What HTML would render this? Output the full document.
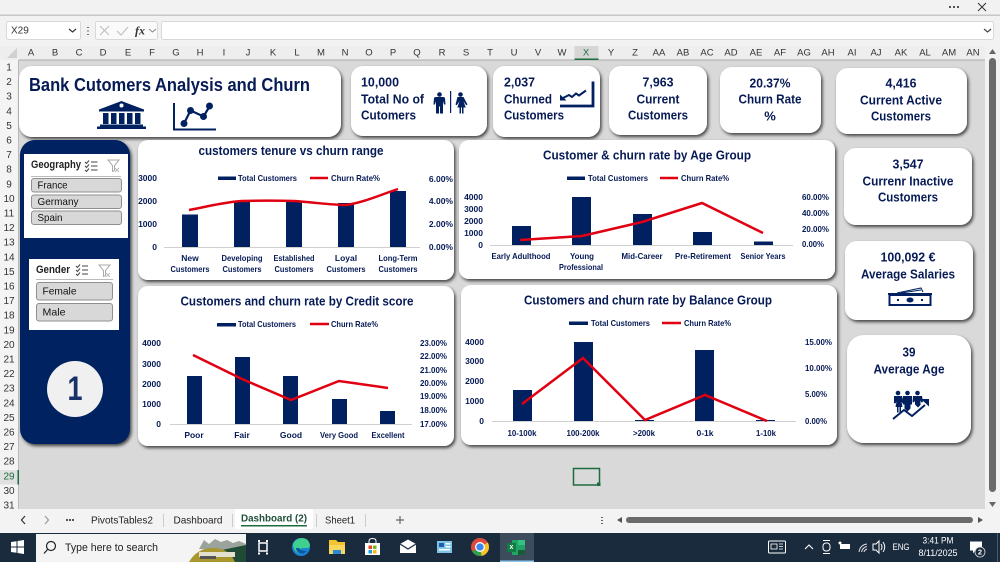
<!DOCTYPE html>
<html><head><meta charset="utf-8"><style>
html,body{margin:0;padding:0;width:1000px;height:562px;overflow:hidden;background:#d9d9d9}
svg{display:block;font-family:"Liberation Sans",sans-serif;filter:blur(.3px)}
text{dominant-baseline:central}
.c{font-size:9.5px;fill:#333;text-anchor:middle}
.r{font-size:10px;fill:#333;text-anchor:middle}
.n{font-weight:bold;fill:#061a55;text-anchor:middle;font-size:13px}
.l{font-weight:bold;fill:#061a55;font-size:13px}
.t{font-weight:bold;fill:#061a55;text-anchor:middle;font-size:13px}
.a{font-weight:bold;fill:#061a55;font-size:8.5px}
.m{font-weight:bold;fill:#061a55;font-size:8.5px;text-anchor:middle}
.e{font-weight:bold;fill:#061a55;font-size:8.5px;text-anchor:end}
.b{fill:#002060}
.ln{fill:none;stroke:#e00012;stroke-width:2.500}
.ax{stroke:#d0d0d0;stroke-width:1}
.card{fill:#fff;filter:url(#s)}
.sl{fill:#d8d8d8;stroke:#8f8f8f;stroke-width:1}
.st{font-size:10.500px;fill:#111}
.tb{font-size:10.500px;fill:#222;text-anchor:middle}
.ic{fill:#002060}
.is{fill:none;stroke:#002060}
</style></head><body>
<svg width="1000" height="562" viewBox="0 0 1000 562" xmlns="http://www.w3.org/2000/svg">
<defs><filter id="s" x="-10%" y="-10%" width="125%" height="125%"><feDropShadow dx="1.500" dy="2" stdDeviation="1.500" flood-color="#000" flood-opacity=".7"/></filter></defs>

<!-- chrome -->
<rect width="1000" height="46" fill="#f2f2f2"/>
<rect y="14.500" width="1000" height="1.500" fill="#c6c6c6"/>
<circle cx="954" cy="7" r="1" fill="#222"/><circle cx="950" cy="7" r="1" fill="#222"/><circle cx="958" cy="7" r="1" fill="#222"/>
<path d="M978 3l8 8M986 3l-8 8" stroke="#333" fill="none"/>
<rect x="6.500" y="21.500" width="74" height="18" rx="2" fill="#fff" stroke="#d8d8d8"/>
<text x="11" y="31" font-size="10" fill="#333">X29</text>
<path d="M69 29l3.500 3 3.500-3" fill="none" stroke="#333" stroke-width="1.200"/>
<path d="M88 27v1M88 30.500v1M88 34v1" stroke="#444" stroke-width="1.500"/>
<rect x="95.500" y="21.500" width="62" height="18" rx="2" fill="#fafafa" stroke="#d8d8d8"/>
<path d="M100 26l9 9M109 26l-9 9" stroke="#bbb" fill="none"/><path d="M117 31l4 4 7-8" stroke="#bbb" fill="none"/>
<text x="135" y="30.500" font-family="Liberation Serif" font-style="italic" font-weight="bold" font-size="12" fill="#333">fx</text>
<path d="M149 29l3.500 3 3.500-3" fill="none" stroke="#888"/>
<rect x="161.500" y="21.500" width="832" height="18" rx="2" fill="#fff" stroke="#d8d8d8"/>
<path d="M984 29l3.500 3 3.500-3" fill="none" stroke="#444" stroke-width="1.200"/>

<!-- col header -->
<rect y="46" width="1000" height="14" fill="#eeeeee"/>
<rect y="59.500" x="19" width="966" height="1" fill="#aaa"/>
<path d="M17 48v10h-10z" fill="#d0d0d0"/>
<rect x="574.500" y="46" width="24" height="14" fill="#d6d6d6"/><rect x="574.500" y="58.500" width="24" height="1.500" fill="#1d6b41"/>
<g class="c">
<text class="c" x="31" y="53">A</text><text class="c" x="55" y="53">B</text><text class="c" x="79" y="53">C</text><text class="c" x="103" y="53">D</text><text class="c" x="128" y="53">E</text><text class="c" x="152" y="53">F</text><text class="c" x="176" y="53">G</text><text class="c" x="200" y="53">H</text><text class="c" x="224" y="53">I</text><text class="c" x="248" y="53">J</text><text class="c" x="273" y="53">K</text><text class="c" x="297" y="53">L</text><text class="c" x="321" y="53">M</text><text class="c" x="345" y="53">N</text><text class="c" x="369" y="53">O</text><text class="c" x="393" y="53">P</text><text class="c" x="417" y="53">Q</text><text class="c" x="442" y="53">R</text><text class="c" x="466" y="53">S</text><text class="c" x="490" y="53">T</text><text class="c" x="514" y="53">U</text><text class="c" x="538" y="53">V</text><text class="c" x="562" y="53">W</text><text class="c" x="586" y="53" style="fill:#1d6b41">X</text><text class="c" x="611" y="53">Y</text><text class="c" x="635" y="53">Z</text><text class="c" x="659" y="53">AA</text><text class="c" x="683" y="53">AB</text><text class="c" x="707" y="53">AC</text><text class="c" x="731" y="53">AD</text><text class="c" x="756" y="53">AE</text><text class="c" x="780" y="53">AF</text><text class="c" x="804" y="53">AG</text><text class="c" x="828" y="53">AH</text><text class="c" x="852" y="53">AI</text><text class="c" x="876" y="53">AJ</text><text class="c" x="901" y="53">AK</text><text class="c" x="925" y="53">AL</text><text class="c" x="949" y="53">AM</text><text class="c" x="973" y="53">AN</text>
</g>

<!-- row header -->
<rect x="0" y="60" width="19" height="450" fill="#f4f4f4"/>
<rect x="18" y="60" width="1" height="450" fill="#bbb"/>
<rect x="0" y="470" width="19" height="14.500" fill="#e0e0e0"/><rect x="17.500" y="470" width="1.500" height="14.500" fill="#1d6b41"/>
<text class="r" x="9" y="68">1</text><text class="r" x="9" y="82.600">2</text><text class="r" x="9" y="97.200">3</text><text class="r" x="9" y="111.800">4</text><text class="r" x="9" y="126.400">5</text><text class="r" x="9" y="141">6</text><text class="r" x="9" y="155.600">7</text><text class="r" x="9" y="170.200">8</text><text class="r" x="9" y="184.800">9</text><text class="r" x="9" y="199.400">10</text><text class="r" x="9" y="214">11</text><text class="r" x="9" y="228.600">12</text><text class="r" x="9" y="243.200">13</text><text class="r" x="9" y="257.800">14</text><text class="r" x="9" y="272.400">15</text><text class="r" x="9" y="287">16</text><text class="r" x="9" y="301.600">17</text><text class="r" x="9" y="316.200">18</text><text class="r" x="9" y="330.800">19</text><text class="r" x="9" y="345.400">20</text><text class="r" x="9" y="360">21</text><text class="r" x="9" y="374.600">22</text><text class="r" x="9" y="389.200">23</text><text class="r" x="9" y="403.800">24</text><text class="r" x="9" y="418.400">25</text><text class="r" x="9" y="433">26</text><text class="r" x="9" y="447.600">27</text><text class="r" x="9" y="462.200">28</text><text class="r" x="9" y="476.800" style="fill:#1d6b41">29</text><text class="r" x="9" y="491.400">30</text><text class="r" x="9" y="506">31</text>

<!-- vertical scrollbar -->
<rect x="985" y="46" width="15" height="464" fill="#f2f2f2"/>
<rect x="989" y="58" width="7" height="434" rx="3.500" fill="#6a6a6a"/>
<path d="M989 54l3.500-5 3.500 5z" fill="#666"/><path d="M989 502h7l-3.500 5z" fill="#666"/>

<!-- cards top -->
<rect class="card" x="19" y="66" width="322" height="71" rx="13"/>
<text x="29" y="85" font-weight="bold" font-size="18" fill="#061a55" textLength="281" lengthAdjust="spacingAndGlyphs">Bank Cutomers Analysis and Churn</text>
<!-- bank -->
<path class="ic" d="M121.500 101l22.500 8.500v2h-45v-2z"/><circle cx="121.500" cy="105.500" r="2" fill="#fff"/>
<path class="ic" d="M103 113h5.500v11h-5.500zM111 113h5.500v11h-5.500zM119 113h5.500v11h-5.500zM127 113h5.500v11h-5.500zM135 113h5.500v11h-5.500z"/>
<path class="ic" d="M100 124.500h43v2h3v2.500h-49v-2.500h3z"/>
<!-- chart icon -->
<path d="M174 103v26.500h42" fill="none" stroke="#002060" stroke-width="2"/>
<path d="M184 123.500l6.500-13 13 6 6-10" fill="none" stroke="#002060" stroke-width="2.200"/>
<circle cx="184" cy="123.500" r="3.500" class="ic"/><circle cx="190.500" cy="110.500" r="3.500" class="ic"/><circle cx="203.500" cy="116.500" r="3.500" class="ic"/><circle cx="209.500" cy="106" r="3.500" class="ic"/>

<rect class="card" x="351" y="66" width="136" height="70" rx="12"/>
<text class="l" x="361" y="82" textLength="38" lengthAdjust="spacingAndGlyphs">10,000</text>
<text class="l" x="361" y="99" textLength="63" lengthAdjust="spacingAndGlyphs">Total No of</text>
<text class="l" x="361" y="115" textLength="55" lengthAdjust="spacingAndGlyphs">Cutomers</text>
<!-- people -->
<circle cx="439.500" cy="94.500" r="2.300" class="ic"/>
<path class="ic" d="M434 98.500q0-1.500 2-1.500h7q2 0 2 1.500l.5 6h-1.500l-1-3.500v12.500h-3v-7h-1v7h-3v-12.500l-1 3.500h-1.500z"/>
<rect x="450" y="91" width="1.200" height="22" fill="#002060"/>
<circle cx="460.500" cy="94.500" r="2.300" class="ic"/>
<path class="ic" d="M457.500 97h6l4 7.500-1.300.7-2.700-4 2.200 6.300h-2.200v6h-1.500v-6h-1v6h-1.500v-6h-2.200l2.200-6.300-2.700 4-1.300-.7z"/>

<rect class="card" x="493" y="66" width="107" height="71" rx="12"/>
<text class="l" x="504" y="82" textLength="31" lengthAdjust="spacingAndGlyphs">2,037</text>
<text class="l" x="504" y="99" textLength="48" lengthAdjust="spacingAndGlyphs">Churned</text>
<text class="l" x="504" y="115" textLength="60" lengthAdjust="spacingAndGlyphs">Customers</text>
<path d="M560 106h33V81.500" fill="none" stroke="#002060" stroke-width="2.800"/>
<path d="M563 98l6-3 3 2 4-3.500 3 2 7-5" fill="none" stroke="#002060" stroke-width="2"/>
<path class="ic" d="M560 100.500v-6l6.500 6z"/>

<rect class="card" x="609" y="66" width="98" height="69" rx="12"/>
<text class="n" x="658" y="82" textLength="31" lengthAdjust="spacingAndGlyphs">7,963</text>
<text class="n" x="658" y="99" textLength="43" lengthAdjust="spacingAndGlyphs">Current</text>
<text class="n" x="658" y="115" textLength="60" lengthAdjust="spacingAndGlyphs">Customers</text>

<rect class="card" x="720" y="67" width="101" height="66" rx="12"/>
<text class="n" x="770" y="83" textLength="41" lengthAdjust="spacingAndGlyphs">20.37%</text>
<text class="n" x="770" y="99" textLength="63" lengthAdjust="spacingAndGlyphs">Churn Rate</text>
<text class="n" x="770" y="116">%</text>

<rect class="card" x="836" y="68" width="131" height="66" rx="12"/>
<text class="n" x="901" y="83" textLength="31" lengthAdjust="spacingAndGlyphs">4,416</text>
<text class="n" x="901" y="100" textLength="82" lengthAdjust="spacingAndGlyphs">Current Active</text>
<text class="n" x="901" y="116" textLength="60" lengthAdjust="spacingAndGlyphs">Customers</text>

<!-- right cards -->
<rect class="card" x="844" y="148" width="128" height="77" rx="12"/>
<text class="n" x="908" y="164" textLength="31" lengthAdjust="spacingAndGlyphs">3,547</text>
<text class="n" x="908" y="181" textLength="91" lengthAdjust="spacingAndGlyphs">Currenr Inactive</text>
<text class="n" x="908" y="197" textLength="60" lengthAdjust="spacingAndGlyphs">Customers</text>

<rect class="card" x="845" y="241" width="128" height="79" rx="12"/>
<text class="n" x="908" y="257" textLength="55" lengthAdjust="spacingAndGlyphs">100,092 €</text>
<text class="n" x="908" y="274" textLength="94" lengthAdjust="spacingAndGlyphs">Average Salaries</text>
<path d="M897 293l24-5 2 4" fill="none" stroke="#002060"/><path d="M901 293l20-3" fill="none" stroke="#002060"/>
<rect x="889.500" y="295" width="41" height="10" fill="#fff" stroke="#002060" stroke-width="2"/>
<rect x="888" y="293" width="44" height="2" class="ic"/>
<ellipse cx="910" cy="300" rx="3.500" ry="2.500" class="ic"/><rect x="897" y="299" width="2" height="2" class="ic"/><rect x="921" y="299" width="2" height="2" class="ic"/>

<rect class="card" x="847" y="335" width="124" height="108" rx="17"/>
<text class="n" x="909" y="352" textLength="13" lengthAdjust="spacingAndGlyphs">39</text>
<text class="n" x="909" y="369" textLength="71" lengthAdjust="spacingAndGlyphs">Average Age</text>
<circle cx="898" cy="393" r="2.300" class="ic"/><circle cx="907.500" cy="393" r="2.300" class="ic"/><circle cx="917.500" cy="393" r="2.300" class="ic"/>
<path class="ic" d="M894 396h8l2 7-1.500.5-1-2 1 5.500h-1.500v5.500h-1.500v-5.500h-1v5.500h-1.500v-5.500h-1.500l1-5.500-1 2-1.500-.5z"/>
<path class="ic" d="M903 396h9v8.500h-1.500v4l-3 3-3-3v-4h-1.500z"/>
<path class="ic" d="M913 396h9l1 6-1.500 .5-1-2v4.500l-2.500 2.500-3-3v-4l-1 2-1.500-.5z"/>
<path d="M893 419l11-9 8 6 13-11" fill="none" stroke="#002060" stroke-width="2"/>
<path class="ic" d="M921 399h8v7.500z"/>

<!-- sidebar -->
<rect x="20" y="140" width="110" height="304" rx="15" fill="#002060" filter="url(#s)"/>
<rect x="24" y="154" width="104" height="84" fill="#fff"/>
<text x="31" y="165" font-weight="bold" font-size="11" fill="#222" textLength="50" lengthAdjust="spacingAndGlyphs">Geography</text>
<path d="M85 162l1.500 1.500 2.500-3M85 166l1.500 1.500 2.500-3M85 170l1.500 1.500 2.500-3M91 162h6.500M91 166h6.500M91 170h6.500" fill="none" stroke="#444"/>
<path d="M108 160h11l-4.500 5.500v5l-2 1v-6z" fill="none" stroke="#aaa"/><path d="M115 168l4 4M119 168l-4 4" stroke="#bbb"/>
<rect x="31" y="176" width="90" height="1" fill="#bbb"/>
<rect class="sl" x="31.500" y="178.500" width="90" height="13.500" rx="2.500"/><text class="st" x="37.500" y="185.500" textLength="30" lengthAdjust="spacingAndGlyphs">France</text>
<rect class="sl" x="31.500" y="195" width="90" height="13.500" rx="2.500"/><text class="st" x="37.500" y="202" textLength="41" lengthAdjust="spacingAndGlyphs">Germany</text>
<rect class="sl" x="31.500" y="211" width="90" height="13.500" rx="2.500"/><text class="st" x="37.500" y="218" textLength="25" lengthAdjust="spacingAndGlyphs">Spain</text>

<rect x="29" y="259" width="90" height="71" fill="#fff"/>
<text x="36" y="270" font-weight="bold" font-size="11" fill="#222" textLength="34" lengthAdjust="spacingAndGlyphs">Gender</text>
<path d="M76 266l1.500 1.500 2.500-3M76 270l1.500 1.500 2.500-3M76 274l1.500 1.500 2.500-3M82 266h6M82 270h6M82 274h6" fill="none" stroke="#444"/>
<path d="M99 265h11l-4.500 5.500v5l-2 1v-6z" fill="none" stroke="#aaa"/><path d="M106 273l4 4M110 273l-4 4" stroke="#bbb"/>
<rect x="36" y="279" width="77" height="1" fill="#bbb"/>
<rect class="sl" x="36.500" y="282.500" width="76" height="17.500" rx="2.500"/><text class="st" x="42.500" y="291.500" textLength="34" lengthAdjust="spacingAndGlyphs">Female</text>
<rect class="sl" x="36.500" y="303.500" width="76" height="17.500" rx="2.500"/><text class="st" x="42.500" y="312.500" textLength="23" lengthAdjust="spacingAndGlyphs">Male</text>
<circle cx="75" cy="389" r="28" fill="#f0f0f0"/>
<text x="75" y="389" text-anchor="middle" font-size="34" font-weight="bold" fill="#1a3068" textLength="15" lengthAdjust="spacingAndGlyphs">1</text>

<!-- chart 1 -->
<rect class="card" x="138" y="140" width="316" height="140" rx="10"/>
<text class="t" x="291" y="150.500" textLength="185" lengthAdjust="spacingAndGlyphs">customers tenure vs churn range</text>
<rect class="b" x="218" y="176.500" width="18" height="3.500"/><text class="a" x="238" y="178" textLength="59" lengthAdjust="spacingAndGlyphs">Total Customers</text>
<path class="ln" d="M310 178h18"/><text class="a" x="331" y="178" textLength="49" lengthAdjust="spacingAndGlyphs">Churn Rate%</text>
<text class="e" x="157" y="178">3000</text><text class="e" x="157" y="201">2000</text><text class="e" x="157" y="224">1000</text><text class="e" x="157" y="247">0</text>
<path class="ax" d="M164 247.500h256"/>
<rect class="b" x="182" y="214.500" width="16" height="32.500"/><rect class="b" x="234" y="201" width="16" height="46"/><rect class="b" x="286" y="201" width="16" height="46"/><rect class="b" x="338" y="203" width="16" height="44"/><rect class="b" x="390" y="191" width="16" height="56"/>
<path class="ln" d="M189 210C210 206 225 202 242 201C260 200.500 278 200.500 294 201C312 202 330 205 346 205C362 203 380 195 398 189"/>
<text class="e" x="453" y="179">6.00%</text><text class="e" x="453" y="201">4.00%</text><text class="e" x="453" y="224">2.00%</text><text class="e" x="453" y="247">0.00%</text>
<text class="m" x="190" y="258">New</text><text class="m" x="190" y="269" textLength="39" lengthAdjust="spacingAndGlyphs">Customers</text>
<text class="m" x="242" y="258" textLength="41" lengthAdjust="spacingAndGlyphs">Developing</text><text class="m" x="242" y="269" textLength="39" lengthAdjust="spacingAndGlyphs">Customers</text>
<text class="m" x="294" y="258" textLength="41" lengthAdjust="spacingAndGlyphs">Established</text><text class="m" x="294" y="269" textLength="39" lengthAdjust="spacingAndGlyphs">Customers</text>
<text class="m" x="346" y="258">Loyal</text><text class="m" x="346" y="269" textLength="39" lengthAdjust="spacingAndGlyphs">Customers</text>
<text class="m" x="398" y="258" textLength="39" lengthAdjust="spacingAndGlyphs">Long-Term</text><text class="m" x="398" y="269" textLength="39" lengthAdjust="spacingAndGlyphs">Customers</text>

<!-- chart 2 -->
<rect class="card" x="459" y="140" width="376" height="139" rx="10"/>
<text class="t" x="647" y="155" textLength="208" lengthAdjust="spacingAndGlyphs">Customer &amp; churn rate by Age Group</text>
<rect class="b" x="567" y="176.500" width="18" height="3.500"/><text class="a" x="588" y="178" textLength="60" lengthAdjust="spacingAndGlyphs">Total Customers</text>
<path class="ln" d="M660 178h18"/><text class="a" x="681" y="178" textLength="48" lengthAdjust="spacingAndGlyphs">Churn Rate%</text>
<text class="e" x="483" y="197">4000</text><text class="e" x="483" y="209">3000</text><text class="e" x="483" y="221">2000</text><text class="e" x="483" y="233">1000</text><text class="e" x="483" y="245">0</text>
<path class="ax" d="M490 245.500h303"/>
<rect class="b" x="512" y="226" width="19" height="19"/><rect class="b" x="572" y="197" width="19" height="48"/><rect class="b" x="633" y="214" width="19" height="31"/><rect class="b" x="693" y="232" width="19" height="13"/><rect class="b" x="754" y="241.500" width="19" height="3.500"/>
<path class="ln" d="M520 240L582 236L642 222L702 203L763 233"/>
<text class="a" x="802" y="197" textLength="27" lengthAdjust="spacingAndGlyphs">60.00%</text><text class="a" x="802" y="213" textLength="27" lengthAdjust="spacingAndGlyphs">40.00%</text><text class="a" x="802" y="229" textLength="27" lengthAdjust="spacingAndGlyphs">20.00%</text><text class="a" x="802" y="244" textLength="22" lengthAdjust="spacingAndGlyphs">0.00%</text>
<text class="m" x="521" y="256" textLength="59" lengthAdjust="spacingAndGlyphs">Early Adulthood</text>
<text class="m" x="582" y="256" textLength="24" lengthAdjust="spacingAndGlyphs">Young</text><text class="m" x="581" y="267" textLength="44" lengthAdjust="spacingAndGlyphs">Professional</text>
<text class="m" x="642" y="256" textLength="41" lengthAdjust="spacingAndGlyphs">Mid-Career</text>
<text class="m" x="703" y="256" textLength="56" lengthAdjust="spacingAndGlyphs">Pre-Retirement</text>
<text class="m" x="763" y="256" textLength="45" lengthAdjust="spacingAndGlyphs">Senior Years</text>

<!-- chart 3 -->
<rect class="card" x="138" y="286" width="316" height="160" rx="10"/>
<text class="t" x="297" y="301" textLength="233" lengthAdjust="spacingAndGlyphs">Customers and churn rate by Credit score</text>
<rect class="b" x="217" y="323" width="19" height="3.500"/><text class="a" x="238" y="324" textLength="58" lengthAdjust="spacingAndGlyphs">Total Customers</text>
<path class="ln" d="M310 324h19"/><text class="a" x="331" y="324" textLength="47" lengthAdjust="spacingAndGlyphs">Churn Rate%</text>
<text class="e" x="161" y="343">4000</text><text class="e" x="161" y="364">3000</text><text class="e" x="161" y="384">2000</text><text class="e" x="161" y="404">1000</text><text class="e" x="161" y="424">0</text>
<path class="ax" d="M170 424.500h242"/>
<rect class="b" x="187" y="376" width="15" height="48"/><rect class="b" x="235" y="357" width="15" height="67"/><rect class="b" x="283" y="376" width="15" height="48"/><rect class="b" x="332" y="399" width="15" height="25"/><rect class="b" x="380" y="411" width="15" height="13"/>
<path class="ln" d="M193 355L242 379L291 400L339 381L388 388"/>
<text class="a" x="420" y="343" textLength="27" lengthAdjust="spacingAndGlyphs">23.00%</text><text class="a" x="420" y="356" textLength="27" lengthAdjust="spacingAndGlyphs">22.00%</text><text class="a" x="420" y="370" textLength="27" lengthAdjust="spacingAndGlyphs">21.00%</text><text class="a" x="420" y="383" textLength="27" lengthAdjust="spacingAndGlyphs">20.00%</text><text class="a" x="420" y="396" textLength="27" lengthAdjust="spacingAndGlyphs">19.00%</text><text class="a" x="420" y="410" textLength="27" lengthAdjust="spacingAndGlyphs">18.00%</text><text class="a" x="420" y="424" textLength="27" lengthAdjust="spacingAndGlyphs">17.00%</text>
<text class="m" x="194" y="435">Poor</text><text class="m" x="242" y="435">Fair</text><text class="m" x="291" y="435">Good</text><text class="m" x="339" y="435" textLength="38" lengthAdjust="spacingAndGlyphs">Very Good</text><text class="m" x="388" y="435" textLength="33" lengthAdjust="spacingAndGlyphs">Excellent</text>

<!-- chart 4 -->
<rect class="card" x="461" y="285" width="376" height="160" rx="10"/>
<text class="t" x="648" y="300" textLength="248" lengthAdjust="spacingAndGlyphs">Customers and churn rate by Balance Group</text>
<rect class="b" x="569" y="321.500" width="19" height="3.500"/><text class="a" x="591" y="323" textLength="59" lengthAdjust="spacingAndGlyphs">Total Customers</text>
<path class="ln" d="M662 323h19"/><text class="a" x="684" y="323" textLength="47" lengthAdjust="spacingAndGlyphs">Churn Rate%</text>
<text class="e" x="484" y="342">4000</text><text class="e" x="484" y="361">3000</text><text class="e" x="484" y="381">2000</text><text class="e" x="484" y="401">1000</text><text class="e" x="484" y="421">0</text>
<path class="ax" d="M492 421.500h304"/>
<rect class="b" x="513" y="390" width="19" height="31"/><rect class="b" x="574" y="342" width="19" height="79"/><rect class="b" x="635" y="420" width="19" height="1"/><rect class="b" x="695" y="350" width="19" height="71"/><rect class="b" x="756" y="420" width="19" height="1"/>
<path class="ln" d="M522 404L583 358L645 420L705 395L767 421"/>
<text class="a" x="805" y="342" textLength="27" lengthAdjust="spacingAndGlyphs">15.00%</text><text class="a" x="805" y="368" textLength="27" lengthAdjust="spacingAndGlyphs">10.00%</text><text class="a" x="805" y="394" textLength="22" lengthAdjust="spacingAndGlyphs">5.00%</text><text class="a" x="805" y="421" textLength="22" lengthAdjust="spacingAndGlyphs">0.00%</text>
<text class="m" x="522" y="433" textLength="29" lengthAdjust="spacingAndGlyphs">10-100k</text><text class="m" x="583" y="433" textLength="33" lengthAdjust="spacingAndGlyphs">100-200k</text><text class="m" x="644" y="433" textLength="22" lengthAdjust="spacingAndGlyphs">&gt;200k</text><text class="m" x="705" y="433">0-1k</text><text class="m" x="766" y="433" textLength="20" lengthAdjust="spacingAndGlyphs">1-10k</text>

<!-- selected cell -->
<rect x="573.500" y="468.500" width="26" height="16.500" fill="none" stroke="#1d6b41" stroke-width="1.500"/>
<rect x="597" y="482.500" width="3.500" height="3.500" fill="#1d6b41"/>

<!-- tab bar -->
<rect y="509" width="1000" height="24" fill="#f3f3f3"/>
<path d="M25 516l-3.500 4 3.500 4" fill="none" stroke="#333" stroke-width="1.200"/>
<path d="M45 516l3.500 4-3.500 4" fill="none" stroke="#999" stroke-width="1.200"/>
<circle cx="67" cy="520" r="1" fill="#222"/><circle cx="70" cy="520" r="1" fill="#222"/><circle cx="73" cy="520" r="1" fill="#222"/>
<text class="tb" x="122" y="520.500" textLength="62" lengthAdjust="spacingAndGlyphs">PivotsTables2</text>
<rect x="163" y="514" width="1" height="13" fill="#ccc"/>
<text class="tb" x="198" y="520.500" textLength="49" lengthAdjust="spacingAndGlyphs">Dashboard</text>
<rect x="232" y="514" width="1" height="13" fill="#ccc"/>
<rect x="235" y="509" width="78" height="20" rx="2" fill="#fff"/>
<text class="tb" x="274" y="518.500" textLength="66" lengthAdjust="spacingAndGlyphs" style="font-weight:bold;fill:#1f4f3a">Dashboard (2)</text>
<rect x="241" y="525" width="66" height="1.500" fill="#1d6b41"/>
<rect x="316" y="514" width="1" height="13" fill="#ccc"/>
<text class="tb" x="340" y="520.500" textLength="30" lengthAdjust="spacingAndGlyphs">Sheet1</text>
<rect x="365" y="514" width="1" height="13" fill="#ccc"/>
<path d="M400 516v8M396 520h8" stroke="#666" stroke-width="1.200"/>
<path d="M602 517v1M602 520v1M602 523v1" stroke="#333" stroke-width="1.500"/>
<path d="M622 517v6l-5-3z" fill="#555"/>
<rect x="626" y="517" width="347" height="6" rx="3" fill="#6a6a6a"/>
<path d="M978 517v6l5-3z" fill="#555"/>

<!-- taskbar -->
<rect y="533" width="1000" height="29" fill="#1b2b3e"/>
<path d="M11 542l5.500-.8v5.300h-5.500zM17.500 541l6.500-1v6.500h-6.500zM11 547.500h5.500v5.300l-5.500-.8zM17.500 547.500h6.500v6.500l-6.500-1z" fill="#fff"/>
<rect x="36" y="534" width="210" height="28" fill="#f4f4f4"/>
<circle cx="51" cy="546" r="4.500" fill="none" stroke="#222" stroke-width="1.200"/><path d="M47.500 549.500l-3.500 4" stroke="#222" stroke-width="1.200"/>
<text x="65" y="548" font-size="11" fill="#222" textLength="93" lengthAdjust="spacingAndGlyphs">Type here to search</text>
<path d="M199 549l5-9 5 4 6-5 6 3 6-2 6 3 6-2 7 3v8z" fill="#9aa39c"/>
<path d="M222 562v-12l24-5v17z" fill="#1f4a35"/>
<path d="M189 562q8-14 24-14t22 14z" fill="#a8962e"/>
<rect x="199" y="552" width="36" height="5" fill="#e4e0d0"/><rect x="200" y="556" width="16" height="3" fill="#555"/>

<rect x="258" y="540" width="2" height="2" fill="#fff"/><rect x="266" y="540" width="2" height="2" fill="#fff"/><rect x="259" y="543" width="8" height="8" fill="none" stroke="#fff" stroke-width="1.500"/><rect x="258" y="552.500" width="2" height="2" fill="#fff"/><rect x="266" y="552.500" width="2" height="2" fill="#fff"/>
<circle cx="301" cy="547" r="9" fill="#1a84d6"/><path d="M293 544q3-6 9-6 6.500 0 8 7 0 3-3 3h-6q1 3 5 3-4 4-8 2-5-3-5-9z" fill="#3fcf8e"/><path d="M299 548q3 3 8 3-4 4-8 2-3-2-3-5z" fill="#0c59a4"/>
<path d="M329 540h7l2 2h7v12h-16z" fill="#f4c430"/><rect x="329" y="545" width="16" height="9" fill="#f9d65c"/><rect x="333" y="550" width="8" height="4" fill="#2a8ad4"/>
<path d="M365 543h15v12h-15z" fill="#fff"/><path d="M369 543v-2q0-2.500 3.500-2.500t3.500 2.500v2" fill="none" stroke="#fff"/>
<rect x="368.500" y="545.500" width="3.500" height="3.500" fill="#e8452c"/><rect x="373" y="545.500" width="3.500" height="3.500" fill="#7ab929"/><rect x="368.500" y="550" width="3.500" height="3.500" fill="#1c9ee6"/><rect x="373" y="550" width="3.500" height="3.500" fill="#f6b80f"/>
<path d="M400 544l8-4.500 8 4.500v9h-16z" fill="#fff"/><path d="M400 544l8 5 8-5" fill="none" stroke="#1b2b3e" stroke-width="1.200"/>
<rect x="437" y="541" width="15" height="12" fill="#7ec4e8"/><rect x="439" y="543" width="5" height="4" fill="#1c5fa8"/><rect x="445.500" y="543" width="5" height="1.500" fill="#fff"/><rect x="445.500" y="546" width="5" height="1.500" fill="#fff"/><rect x="439" y="549" width="11" height="1.500" fill="#fff"/>
<circle cx="480" cy="547" r="9" fill="#dd4b3e"/><path d="M480 547l7.800 -4.500a9 9 0 0 1 -6.300 13.400z" fill="#f7c325"/><path d="M480 547l1.500 8.900a9 9 0 0 1-9.300-4.400z" fill="#2ba24c"/><circle cx="480" cy="547" r="4.300" fill="#3b86f0" stroke="#fff" stroke-width="1.300"/>
<rect x="500" y="533" width="34" height="29" fill="#3d4c5c"/><rect x="500" y="560.500" width="34" height="1.500" fill="#8fc8f0"/>
<rect x="512" y="540" width="13" height="15" fill="#21a366"/><rect x="518" y="540" width="7" height="5" fill="#33c481"/><rect x="518" y="550" width="7" height="5" fill="#185c37"/>
<rect x="507" y="543" width="9" height="9" fill="#107c41"/><text x="511.500" y="547.500" font-size="7" font-weight="bold" fill="#fff" text-anchor="middle">x</text>

<rect x="768.500" y="541" width="17" height="12" rx="1" fill="none" stroke="#fff"/><rect x="771" y="544" width="6" height="5" fill="none" stroke="#fff" stroke-width=".8"/><path d="M779 544h4M779 546.500h4M779 549h4" stroke="#fff" stroke-width=".8"/>
<path d="M805 549l4-4 4 4" fill="none" stroke="#fff" stroke-width="1.100"/>
<rect x="823" y="543" width="7" height="8" rx="3" fill="none" stroke="#fff"/><path d="M823 540.500h7M823 553.500h7" stroke="#fff"/>
<rect x="840" y="544" width="10" height="5" fill="#fff"/><circle cx="840" cy="543" r="1.500" fill="#fff"/>
<path d="M859 552q1-7 8-8M861.500 552q1-4.500 5.500-5.500M864 552q.5-2 3-3" fill="none" stroke="#ddd"/>
<path d="M873 544h3l3-3v12l-3-3h-3z" fill="none" stroke="#fff"/><path d="M881 544q2 3 0 6M883 542q3.500 5 0 10" fill="none" stroke="#fff"/>
<text x="901" y="547" font-size="9" fill="#fff" text-anchor="middle" textLength="17" lengthAdjust="spacingAndGlyphs">ENG</text>
<text x="938" y="541" font-size="9.500" fill="#fff" text-anchor="middle" textLength="31" lengthAdjust="spacingAndGlyphs">3:41 PM</text>
<text x="938" y="553.500" font-size="9.500" fill="#fff" text-anchor="middle" textLength="39" lengthAdjust="spacingAndGlyphs">8/11/2025</text>
<path d="M970 541.500h12v9h-7l-2 3v-3h-3z" fill="#fff"/>
<circle cx="980" cy="552" r="5" fill="#1b2b3e" stroke="#ddd" stroke-width=".8"/><text x="980" y="552" font-size="7.500" font-weight="bold" fill="#fff" text-anchor="middle">2</text>
<rect x="997" y="533" width="1" height="29" fill="#4a5a6c"/>
</svg>
</body></html>
